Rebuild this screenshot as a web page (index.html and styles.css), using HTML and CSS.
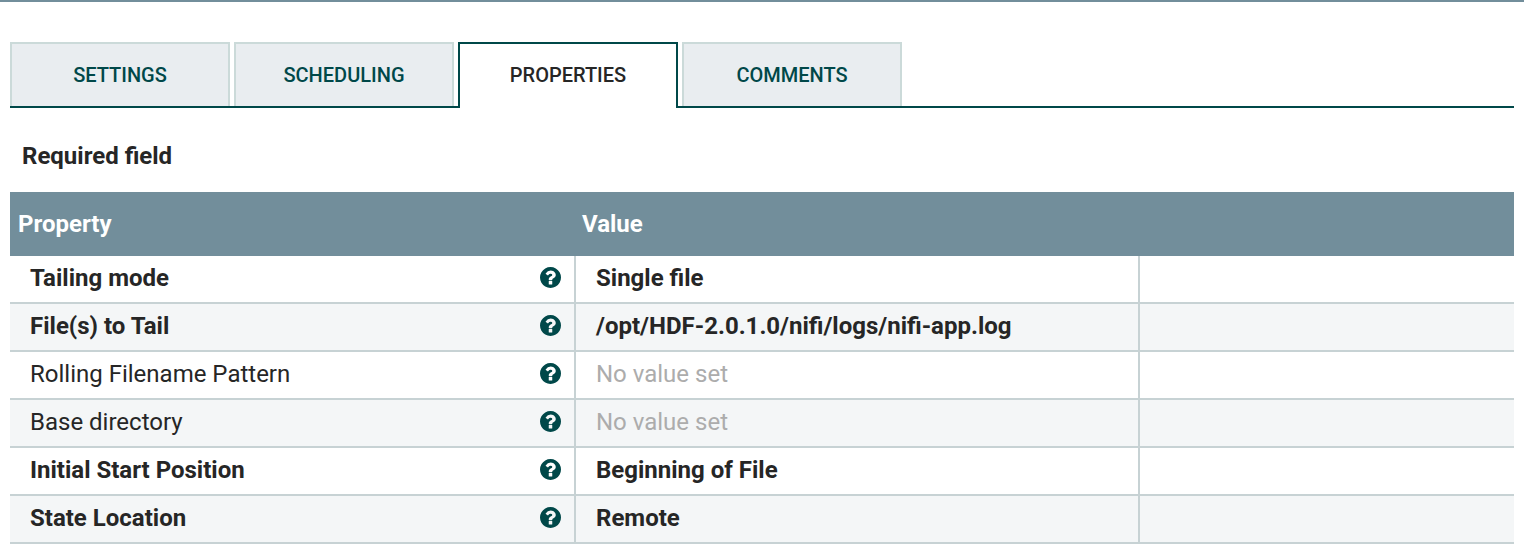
FILE: index.html
```html
<!DOCTYPE html>
<html lang="en">
<head>
<meta charset="utf-8">
<title>Processor properties</title>
<link rel="stylesheet" href="styles.css">
</head>
<body>
<svg class="defs" aria-hidden="true"><symbol id="help" viewBox="128 128 1536 1536"><path fill="currentColor" d="M1024 1376v-192q0-14-9-23t-23-9h-192q-14 0-23 9t-9 23v192q0 14 9 23t23 9h192q14 0 23-9t9-23zM1280 704q0-88-55.500-163t-138.500-116-170-41q-243 0-371 213-15 24 8 42l132 100q7 6 19 6 16 0 25-12 53-68 86-92 34-24 86-24 48 0 85.500 26t37.500 59q0 38-20 61t-68 45q-63 28-115.500 86.500t-52.500 125.500v36q0 14 9 23t23 9h192q14 0 23-9t9-23q0-19 21.500-49.500t54.500-49.500q32-18 49-28.500t46-35 44.500-48 28-60.500 12.500-81zM1664 896q0 209-103 385.500t-279.500 279.500-385.500 103-385.500-103-279.500-279.500-103-385.500 103-385.500 279.500-279.500 385.500-103 385.500 103 279.500 279.500 103 385.500z"/></symbol></svg>
<main class="dialog">
<nav class="tabs">
<button class="tab">SETTINGS</button>
<button class="tab">SCHEDULING</button>
<button class="tab active">PROPERTIES</button>
<button class="tab">COMMENTS</button>
</nav>
<h1 class="legend">Required field</h1>
<table class="grid">
<colgroup><col class="c1"><col class="c2"><col></colgroup>
<thead><tr><th>Property</th><th>Value</th><th></th></tr></thead>
<tbody>
<tr class="req"><td><div class="name">Tailing mode<svg class="help"><use href="#help"/></svg></div></td><td>Single file</td><td></td></tr>
<tr class="req"><td><div class="name">File(s) to Tail<svg class="help"><use href="#help"/></svg></div></td><td>/opt/HDF-2.0.1.0/nifi/logs/nifi-app.log</td><td></td></tr>
<tr><td><div class="name">Rolling Filename Pattern<svg class="help"><use href="#help"/></svg></div></td><td class="unset">No value set</td><td></td></tr>
<tr><td><div class="name">Base directory<svg class="help"><use href="#help"/></svg></div></td><td class="unset">No value set</td><td></td></tr>
<tr class="req"><td><div class="name">Initial Start Position<svg class="help"><use href="#help"/></svg></div></td><td>Beginning of File</td><td></td></tr>
<tr class="req"><td><div class="name">State Location<svg class="help"><use href="#help"/></svg></div></td><td>Remote</td><td></td></tr>
</tbody>
</table>
</main>
</body>
</html>
```
FILE: styles.css
```css
* { box-sizing: border-box; }
body { margin: 0; background: #fff; color: #262626; font: 24px/28px Roboto, sans-serif; }
.defs { display: none; }
.dialog { border-top: 2px solid #728e9b; padding: 40px 10px 0; }
.tabs { display: flex; gap: 4px; border-bottom: 2px solid #004849; }
.tab { flex: 0 0 220px; height: 64px; padding: 0; border: 2px solid #cbdad9; border-bottom: 0; border-radius: 0; background: #e9edf0; color: #004849; font: 500 20px/24px Roboto, sans-serif; }
.tab.active { height: 66px; margin-bottom: -2px; padding-bottom: 2px; border-color: #004849; background: #fff; color: #262626; }
.legend { margin: 34px 12px 22px; font-size: 24px; line-height: 28px; font-weight: 700; }
.grid { width: 100%; table-layout: fixed; border-collapse: separate; border-spacing: 0; }
.c1 { width: 566px; }
.c2 { width: 564px; }
th { height: 64px; padding: 0 6px; background: #728e9b; color: #fff; text-align: left; font-weight: 700; }
th:first-child { padding-left: 8px; }
td { height: 48px; padding: 0 20px 2px; border-bottom: 2px solid #c7d2d4; border-right: 2px solid #c7d2d4; }
td:first-child { padding-right: 13px; }
td:last-child { border-right: 0; }
tbody tr:nth-child(even) { background: #f4f6f7; }
.req { font-weight: 700; }
.name { display: flex; align-items: flex-start; justify-content: space-between; }
.help { width: 21px; height: 21px; margin-top: 3px; color: #004849; }
.unset { color: #acacac; }
```
